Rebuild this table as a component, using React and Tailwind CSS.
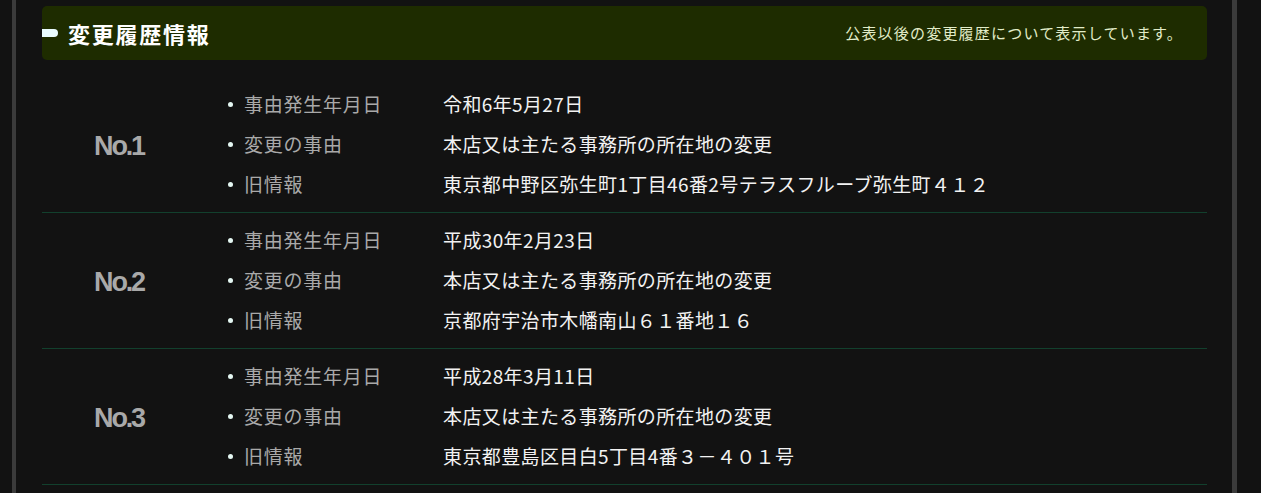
import React from "react";

const records = [
  {
    no: "No.1",
    date: "令和6年5月27日",
    reason: "本店又は主たる事務所の所在地の変更",
    old: "東京都中野区弥生町1丁目46番2号テラスフルーブ弥生町４１２",
  },
  {
    no: "No.2",
    date: "平成30年2月23日",
    reason: "本店又は主たる事務所の所在地の変更",
    old: "京都府宇治市木幡南山６１番地１６",
  },
  {
    no: "No.3",
    date: "平成28年3月11日",
    reason: "本店又は主たる事務所の所在地の変更",
    old: "東京都豊島区目白5丁目4番３－４０１号",
  },
];

const jp = { fontFamily: '"Noto Sans CJK JP", "Noto Sans", sans-serif' };

function Item({ label, value }) {
  return (
    <li className="flex items-center h-10">
      <span className="w-[5px] h-[5px] rounded-full bg-[#e4f7f2] ml-[32px] mr-[11px]" />
      <span className="w-[199px] text-[19px] tracking-[0.04em] text-[#a9a9a9]">{label}</span>
      <span className="text-[19px] tracking-[0.02em] text-[#f2f2f2]">{value}</span>
    </li>
  );
}

function Record({ rec }) {
  return (
    <div className="flex items-center h-[136px] border-b border-[#12402d]">
      <div
        className="w-[154px] pt-[3px] text-center text-[27px] font-bold tracking-[-0.08em] text-[#a9a9a9]"
        style={{ fontFamily: '"Liberation Sans", Arial, sans-serif' }}
      >
        {rec.no}
      </div>
      <ul className="flex flex-col">
        <Item label="事由発生年月日" value={rec.date} />
        <Item label="変更の事由" value={rec.reason} />
        <Item label="旧情報" value={rec.old} />
      </ul>
    </div>
  );
}

export default function App() {
  return (
    <div className="w-[1261px] h-[493px] overflow-hidden bg-[#121212] flex" style={jp}>
      <div className="w-[12px]" />
      <div className="w-[4px] bg-[#3b3b3b]" />
      <div className="flex-1 pl-[26px] pr-[25px] pt-[6px]">
        <div className="h-[54px] bg-[#1e2c00] rounded-[5px] flex items-center justify-between pr-[24px]">
          <div className="flex items-center">
            <span className="w-[16px] h-[8px] bg-[#eafcff] rounded-r-full mr-[10px]" />
            <h2 className="text-[22px] font-bold tracking-[0.08em] text-white">変更履歴情報</h2>
          </div>
          <p className="text-[15px] tracking-[0.08em] text-[#e2ecc9]">公表以後の変更履歴について表示しています。</p>
        </div>
        <div className="mt-[17px]">
          {records.map((r) => (
            <Record key={r.no} rec={r} />
          ))}
        </div>
      </div>
      <div className="w-[5px] bg-[#3b3b3b]" />
      <div className="w-[24px]" />
    </div>
  );
}
